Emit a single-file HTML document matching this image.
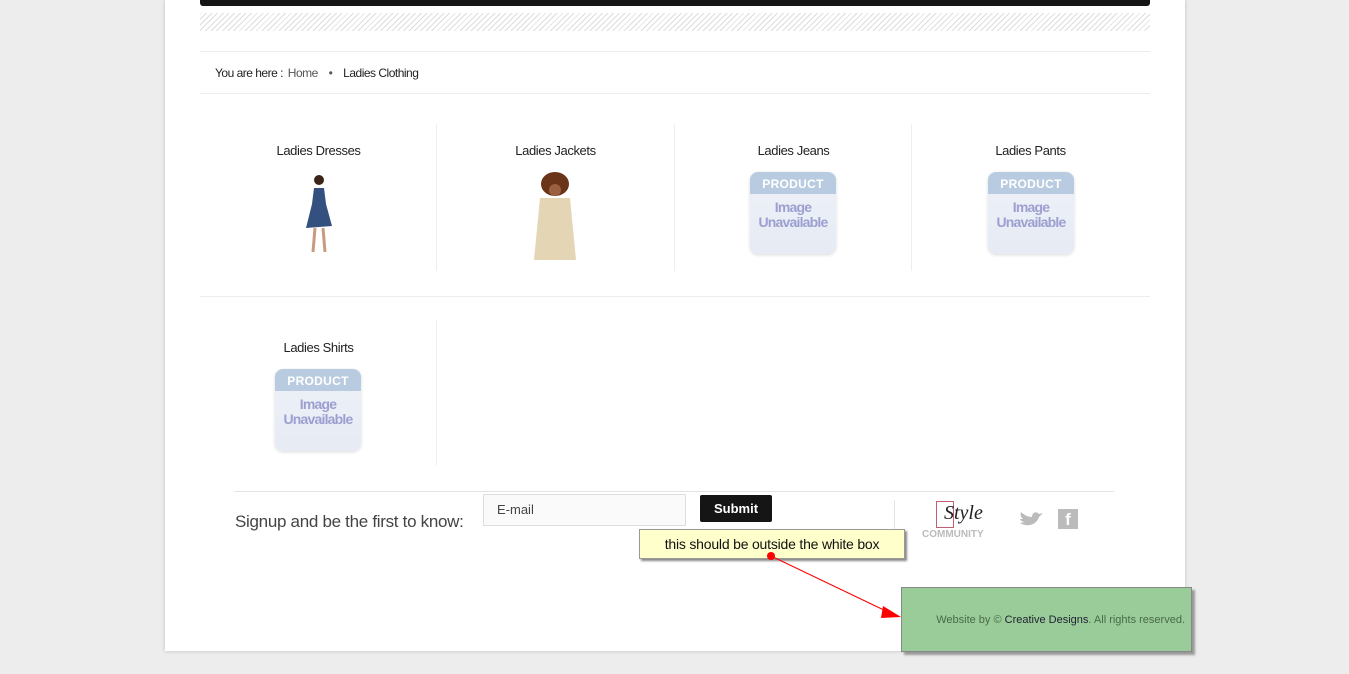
<!DOCTYPE html><html><head><style>
body{margin:0;width:1349px;height:674px;background:#ededed;position:relative;overflow:hidden;font-family:"Liberation Sans",sans-serif}
.a{position:absolute}
.box{left:165px;top:0;width:1020px;height:651px;background:#fff;box-shadow:0 0 4px rgba(0,0,0,.2)}
.t{font-size:13px;color:#222;text-align:center;width:237px;letter-spacing:-.4px}
.na{width:86px;height:82px;border-radius:8px;background:linear-gradient(#eef1f7,#e6ebf4);box-shadow:0 1px 3px rgba(0,0,0,.15);overflow:hidden;text-align:center;font-weight:bold;color:#9c9fd0}
.na .h{background:#b9cbe0;color:#fff;font-size:12px;height:22px;line-height:24px;letter-spacing:.3px}
.na .b{font-size:14px;line-height:15px;margin-top:6px;letter-spacing:-.8px}
</style></head><body>
<div class="a box"></div>
<div class="a" style="left:200px;top:0;width:950px;height:6px;background:#151515;border-radius:0 0 3px 3px"></div>
<div class="a" style="left:200px;top:13px;width:950px;height:18px;background:repeating-linear-gradient(135deg,#ddd 0 1px,#fff 1px 4px)"></div>
<div class="a" style="left:200px;top:51px;width:950px;height:1px;background:#ececec"></div>
<div class="a" style="left:200px;top:93px;width:950px;height:1px;background:#ececec"></div>
<div class="a" style="left:215px;top:66px;font-size:12px;color:#222;letter-spacing:-.5px">You are here : <span style="color:#555;margin-left:2px">Home</span> <span style="margin:0 8px;color:#555">•</span> Ladies Clothing</div>
<div class="a" style="left:436px;top:124px;width:1px;height:147px;background:#eee"></div>
<div class="a" style="left:674px;top:124px;width:1px;height:147px;background:#eee"></div>
<div class="a" style="left:911px;top:124px;width:1px;height:147px;background:#eee"></div>
<div class="a" style="left:200px;top:296px;width:950px;height:1px;background:#ececec"></div>
<div class="a" style="left:436px;top:320px;width:1px;height:145px;background:#eee"></div>
<div class="a t" style="left:200px;top:143px">Ladies Dresses</div>
<div class="a t" style="left:437px;top:143px">Ladies Jackets</div>
<div class="a t" style="left:675px;top:143px">Ladies Jeans</div>
<div class="a t" style="left:912px;top:143px">Ladies Pants</div>
<div class="a t" style="left:200px;top:340px">Ladies Shirts</div>
<svg class="a" style="left:298px;top:172px" width="40" height="84"><circle cx="21" cy="8" r="5" fill="#3a2418"/><path d="M16 16h10l2 16 6 22-26 2 6-24z" fill="#33507f"/><path d="M17 56l-2 24M25 56l2 24" stroke="#c89a80" stroke-width="3"/></svg>
<svg class="a" style="left:526px;top:170px" width="58" height="90"><ellipse cx="29" cy="14" rx="14" ry="12" fill="#6a3418"/><path d="M14 28h30l6 62H8z" fill="#e4d5b4"/><circle cx="29" cy="20" r="6" fill="#9a6040"/></svg>
<div class="a na" style="left:750px;top:172px"><div class="h">PRODUCT</div><div class="b">Image<br>Unavailable</div></div>
<div class="a na" style="left:988px;top:172px"><div class="h">PRODUCT</div><div class="b">Image<br>Unavailable</div></div>
<div class="a na" style="left:275px;top:369px"><div class="h">PRODUCT</div><div class="b">Image<br>Unavailable</div></div>
<div class="a" style="left:234px;top:491px;width:880px;height:1px;background:#e4e4e4"></div>
<div class="a" style="left:235px;top:512px;font-size:17px;color:#444;letter-spacing:-.3px">Signup and be the first to know:</div>
<div class="a" style="left:483px;top:494px;width:188px;height:30px;border:1px solid #ddd;background:#fafafa;font-size:13px;color:#444;line-height:30px;padding-left:13px">E-mail</div>
<div class="a" style="left:700px;top:495px;width:72px;height:27px;background:#151515;border-radius:2px;color:#fff;font-weight:bold;font-size:13px;text-align:center;line-height:27px">Submit</div>
<div class="a" style="left:894px;top:500px;width:1px;height:46px;background:#e4e4e4"></div>
<div class="a" style="left:936px;top:501px;width:16px;height:25px;border:1px solid #c06070"></div>
<div class="a" style="left:944px;top:502px;font:italic 20px 'Liberation Serif',serif;color:#222">Style</div>
<div class="a" style="left:922px;top:529px;font-size:10px;font-weight:bold;color:#bbb">COMMUNITY</div>
<svg class="a" style="left:1018px;top:509px" width="26" height="20"><path d="M2 14c6 4 16 3 19-6l4-4-4 1c-2-3-7-2-7 3-4 0-8-2-11-5-1 3 0 5 2 7l-3 0c1 2 3 3 5 3z" fill="#bbb"/></svg>
<div class="a" style="left:1058px;top:509px;width:20px;height:20px;background:#bbb;color:#fff;font-weight:bold;font-size:17px;text-align:center;line-height:22px">f</div>
<div class="a" style="left:639px;top:529px;width:264px;height:28px;background:#ffffcc;border:1px solid #999;box-shadow:2px 2px 2px #888;font-size:14px;line-height:28px;text-align:center;color:#111;letter-spacing:-.2px">this should be outside the white box</div>
<div class="a" style="left:901px;top:587px;width:291px;height:65px;background:#99cc99;border:1px solid #888;box-shadow:3px 3px 2px #999;font-size:11px;color:#4a6a4a;line-height:64px;text-align:right;padding-right:6px;box-sizing:border-box">Website by © <span style="color:#223">Creative Designs</span>. All rights reserved.</div>
<svg class="a" style="left:0;top:0" width="1349" height="674"><line x1="771" y1="556" x2="888" y2="612" stroke="red"/><path d="M901 617l-18-11-2 12z" fill="red"/><circle cx="771" cy="556" r="4" fill="red"/></svg>
</body></html>
